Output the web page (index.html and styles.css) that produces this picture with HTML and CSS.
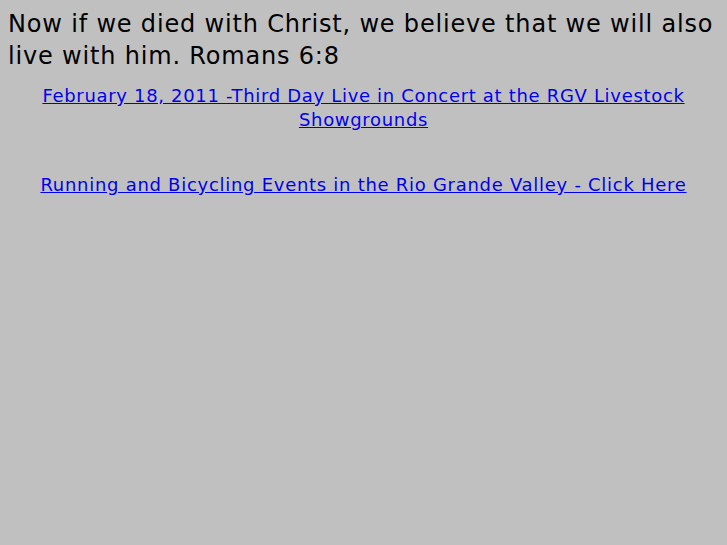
FILE: index.html
```html
<!DOCTYPE html>
<html>
<head>
<meta charset="utf-8">
<link rel="stylesheet" href="styles.css">
</head>
<body>
<p class="verse">Now if we died with Christ, we believe that we will also live with him. Romans 6:8</p>
<p class="link-row"><a href="#">February 18, 2011 -Third Day Live in Concert at the RGV Livestock Showgrounds</a></p>
<p class="link-row gap"><a href="#">Running and Bicycling Events in the Rio Grande Valley - Click Here</a></p>
</body>
</html>
```
FILE: styles.css
```css
html { background: #c0c0c0; }
body {
  margin: 8px;
  font-family: "DejaVu Sans", sans-serif;
  color: #000;
}
.verse {
  margin: 0;
  font-size: 24px;
  line-height: 32px;
  letter-spacing: 0.82px;
}
.link-row {
  margin: 12px 0 0;
  text-align: center;
  font-size: 18px;
  line-height: 24px;
  letter-spacing: 0.68px;
}
.link-row.gap { margin-top: 41px; letter-spacing: 0.72px; }
.link-row a { color: #0000ee; }
```
